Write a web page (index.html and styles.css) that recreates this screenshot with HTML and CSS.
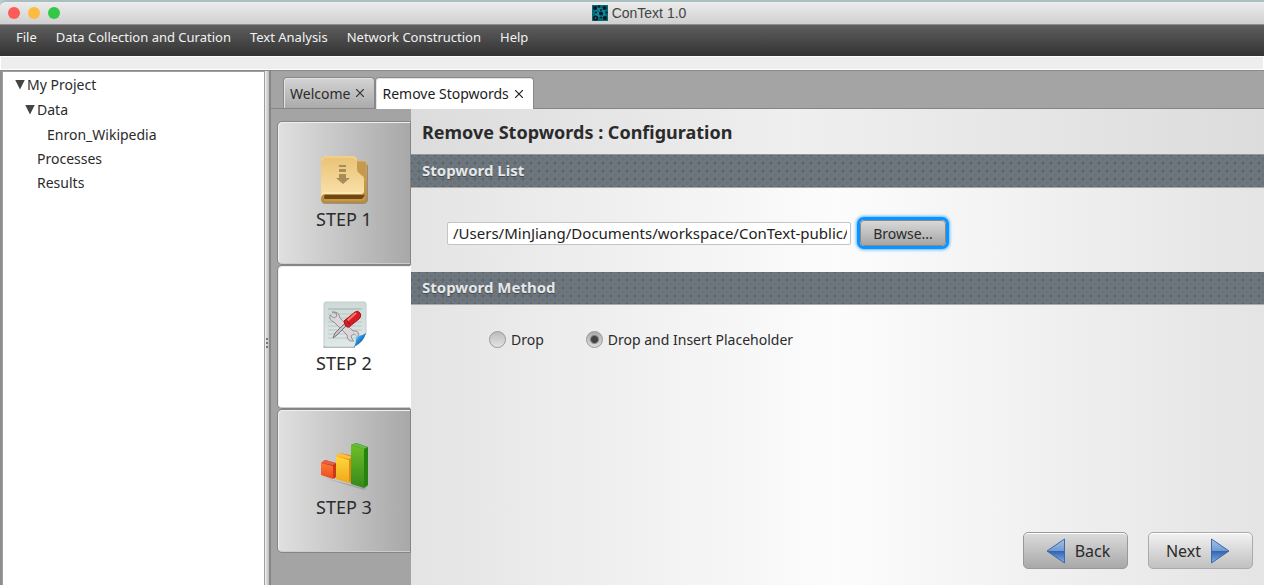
FILE: index.html
```html
<!DOCTYPE html>
<html lang="en">

<head>
    <meta charset="UTF-8">
    <meta name="viewport" content="width=device-width, initial-scale=1.0">
    <title>ConText 1.0</title>
    <link rel="stylesheet" href="styles.css">
</head>

<body>

    <!-- Title bar -->
    <header class="titlebar">
        <div class="lights">
            <button class="light close" aria-label="Close"></button>
            <button class="light minimize" aria-label="Minimize"></button>
            <button class="light maximize" aria-label="Maximize"></button>
        </div>
        <h1 class="app-name">
            <svg width="16" height="16" viewBox="0 0 16 16" aria-hidden="true">
                <rect width="16" height="16" fill="#08687c"/>
                <rect x="3" y="3" width="10" height="9" fill="#0e8599"/>
                <path d="M3 3l6 6M9 9l4 4" stroke="#0a5565" fill="none"/>
                <g fill="#061a20">
                    <circle cx="3" cy="3" r="2"/><circle cx="7" cy="1.500" r="1.200"/><circle cx="12.500" cy="3" r="2"/>
                    <circle cx="9" cy="8.500" r="2"/><circle cx="4" cy="7.500" r="1"/><circle cx="14.500" cy="7.500" r="1"/>
                    <circle cx="3.500" cy="13" r="2.600"/><circle cx="13" cy="13" r="2"/><circle cx="9" cy="12.500" r="1"/>
                    <circle cx="9" cy="5" r="1"/>
                </g>
                <circle cx="3.500" cy="13" r=".8" fill="#5f8e96"/>
            </svg>
            ConText 1.0
        </h1>
    </header>

    <!-- Menu -->
    <nav class="menubar">
        <button>File</button>
        <button>Data Collection and Curation</button>
        <button>Text Analysis</button>
        <button>Network Construction</button>
        <button>Help</button>
    </nav>
    <div class="toolbar"></div>

    <div class="workspace">

        <!-- Project tree -->
        <aside class="sidebar">
            <ul class="tree">
                <li>
                    <button class="toggle"><span class="arrow"></span>My Project</button>
                    <ul>
                        <li>
                            <button class="toggle"><span class="arrow"></span>Data</button>
                            <ul>
                                <li><span class="leaf">Enron_Wikipedia</span></li>
                            </ul>
                        </li>
                        <li><span class="leaf">Processes</span></li>
                        <li><span class="leaf">Results</span></li>
                    </ul>
                </li>
            </ul>
        </aside>

        <div class="splitter"><i></i><i></i><i></i></div>

        <main class="main">
            <div class="tabs">
                <div class="tab">
                    <span>Welcome</span>
                    <button aria-label="Close Welcome"><svg width="8" height="8" viewBox="0 0 8 8"><path d="M0 0l8 8M8 0L0 8" stroke="#333" stroke-width="1.200"/></svg></button>
                </div>
                <div class="tab active">
                    <span>Remove Stopwords</span>
                    <button aria-label="Close Remove Stopwords"><svg width="8" height="8" viewBox="0 0 8 8"><path d="M0 0l8 8M8 0L0 8" stroke="#222" stroke-width="1.200"/></svg></button>
                </div>
            </div>

            <div class="pane">

                <!-- Steps -->
                <div class="steps">
                    <button class="step">
                        <svg width="50" height="50" viewBox="0 0 50 50" aria-hidden="true">
                            <defs>
                                <linearGradient id="cover" x1="0" y1="0" x2="0" y2="1">
                                    <stop offset="0" stop-color="#e9c274"/><stop offset="1" stop-color="#fbe3ad"/>
                                </linearGradient>
                                <linearGradient id="spine" x1="0" y1="0" x2="0" y2="1">
                                    <stop offset="0" stop-color="#d9a850"/><stop offset="1" stop-color="#b98b3c"/>
                                </linearGradient>
                            </defs>
                            <path d="M3 46q0 3 3 3h38q4 0 5-4V10H5z" fill="#555" opacity=".45"/>
                            <path d="M30 6h14q4 0 4 4v34q0 4-4 4H5q-3 0-3-4V36z" fill="url(#spine)"/>
                            <path d="M38 7h6q3 0 3 3v14l-6-4-3-4z" fill="#c59a4c"/>
                            <path d="M6 40h38q2 0 2-2l-1 4-2 2H6q-2-2 0-4z" fill="#6d4817"/>
                            <path d="M5 44h38l3-3v2q0 3-3 3H6z" fill="#c99943"/>
                            <path d="M2 5q0-4 4-4h28q4 0 4 4v9q0 3 2 4l2 2q3 1 3 4v12q0 3-3 3H6q-3 0-4 4z" fill="url(#cover)"/>
                            <path d="M3 6q0-4 3-4h28q3 0 3 3" fill="none" stroke="#f6dc9d"/>
                            <path d="M4 38h38q2 0 2-2" fill="none" stroke="#fff0c4"/>
                            <path d="M20 10h7v2h-7zM20 14h7v3h-7zM20 19h7v4h4l-7 6-7-6h3z" fill="#a88d58"/>
                        </svg>
                        <span>STEP 1</span>
                    </button>
                    <button class="step active">
                        <svg width="50" height="50" viewBox="0 0 50 50" aria-hidden="true">
                            <defs>
                                <linearGradient id="sheet" x1="0" y1="0" x2="0" y2="1">
                                    <stop offset="0" stop-color="#cddad8"/><stop offset="1" stop-color="#e0e8e6"/>
                                </linearGradient>
                                <linearGradient id="curl" x1="0" y1="0" x2="1" y2="1">
                                    <stop offset=".1" stop-color="#e8f8ff"/><stop offset=".4" stop-color="#2a94dc"/><stop offset=".8" stop-color="#0a4a9c"/>
                                </linearGradient>
                            </defs>
                            <path d="M4 47h32v2H5z" fill="#a5aaa9"/>
                            <path d="M7 3h38q2 0 2 2v30L35 48H7q-2 0-2-2V5q0-2 2-2z" fill="url(#sheet)" stroke="#c0ccca"/>
                            <path d="M9 10h34" stroke="#a1adab"/>
                            <path d="M9 15h34M9 19h34M9 23h34M9 27h34M9 31h34M9 35h32M9 39h27" stroke="#bcc8c6"/>
                            <path d="M13 13q7-1 8 6l13 13q7-1 5 6l-4-3-3 2 1 3 2 2q-7 1-7-6L15 23q-5-1-4-7l4 3 3-2-1-3z" fill="#dcd6d8" stroke="#969094"/>
                            <path d="M14 39l2-5 10-10 2 2-10 10z" fill="#c4c4c7" stroke="#77777b"/>
                            <path d="M25 22L36 13q3-2 5 1t-1 6L30 28q-4 1-5-6z" fill="#d51f24" stroke="#a8151a"/>
                            <path d="M28 22l9-8" stroke="#ff7773" stroke-width="2"/>
                            <path d="M27 20l4 6" stroke="#991015"/>
                            <path d="M35 48q3-5 1-12 6 2 11-2-2 9-12 14z" fill="url(#curl)"/>
                        </svg>
                        <span>STEP 2</span>
                    </button>
                    <button class="step">
                        <svg width="50" height="50" viewBox="0 0 50 50" aria-hidden="true">
                            <defs>
                                <linearGradient id="red" x1="0" y1="0" x2="0" y2="1">
                                    <stop offset="0" stop-color="#ff7a35"/><stop offset="1" stop-color="#e84a1e"/>
                                </linearGradient>
                                <linearGradient id="yellow" x1="0" y1="0" x2="0" y2="1">
                                    <stop offset="0" stop-color="#ffd83c"/><stop offset="1" stop-color="#f0a81c"/>
                                </linearGradient>
                                <linearGradient id="green" x1="0" y1="0" x2="0" y2="1">
                                    <stop offset="0" stop-color="#6fbe28"/><stop offset="1" stop-color="#35881a"/>
                                </linearGradient>
                            </defs>
                            <path d="M3 34l14 4 16 4 12 3 4-3v1l-4 4-14-4-16-5z" fill="#555" opacity=".25"/>
                            <path d="M2 20l4-3 11 3v14l-2 2z" fill="#c93817"/>
                            <path d="M2 20l4-3 11 3-3 2z" fill="#e8603f"/>
                            <path d="M2 20l12 3v13L2 32z" fill="url(#red)"/>
                            <path d="M17 13l5-3 12 3v25l-3 2z" fill="#dc8b10"/>
                            <path d="M17 13l4-3 12 4-3 2z" fill="#ffbf3a"/>
                            <path d="M17 13l13 4v23l-13-4z" fill="url(#yellow)"/>
                            <path d="M32 2l5-2 12 4v38l-4 3z" fill="#25840f"/>
                            <path d="M32 2l4-2 13 4-4 2z" fill="#66b942"/>
                            <path d="M32 2l13 4v39l-13-4z" fill="url(#green)"/>
                        </svg>
                        <span>STEP 3</span>
                    </button>
                </div>

                <!-- Configuration -->
                <form class="config">
                    <h2>Remove Stopwords : Configuration</h2>

                    <h3 id="list-title">Stopword List</h3>
                    <div class="file-row">
                        <input type="text" class="path" aria-labelledby="list-title" value="/Users/MinJiang/Documents/workspace/ConText-public/">
                        <button type="button" class="browse">Browse...</button>
                    </div>

                    <h3>Stopword Method</h3>
                    <div class="method-row">
                        <label><input type="radio" name="method">Drop</label>
                        <label><input type="radio" name="method" checked>Drop and Insert Placeholder</label>
                    </div>

                    <div class="actions">
                        <button type="button" class="nav-btn back">
                            <svg width="20" height="26" viewBox="0 0 20 26" aria-hidden="true">
                                <defs>
                                    <linearGradient id="blue" x1="0" y1="0" x2="0" y2="1">
                                        <stop offset="0" stop-color="#a8c4e4"/><stop offset=".5" stop-color="#6c9bd2"/><stop offset=".52" stop-color="#3565ae"/><stop offset="1" stop-color="#7fb0ee"/>
                                    </linearGradient>
                                </defs>
                                <path d="M1 13L18.500 1v24z" fill="url(#blue)" stroke="#3c68ac"/>
                            </svg>
                            Back
                        </button>
                        <button type="button" class="nav-btn next">
                            Next
                            <svg width="20" height="26" viewBox="0 0 20 26" aria-hidden="true">
                                <path d="M19 13L1.500 1v24z" fill="url(#blue)" stroke="#3c68ac"/>
                            </svg>
                        </button>
                    </div>
                </form>
            </div>
        </main>
    </div>

</body>

</html>
```
FILE: styles.css
```css
* {
    box-sizing: border-box;
}

body {
    margin: 0;
    min-height: 100vh;
    display: flex;
    flex-direction: column;
    background-color: #b5cdcd;
    color: #2b2b2b;
    font-family: "Lucida Grande", "Noto Sans", sans-serif;
    font-size: 14px;
}

button,
input {
    font: inherit;
    color: inherit;
}

button {
    padding: 0;
    border: 0;
    background: none;
}

h1,
h2,
h3,
ul {
    margin: 0;
    padding: 0;
}

/* Title bar */
.titlebar {
    display: grid;
    grid-template-columns: 1fr auto 1fr;
    align-items: center;
    height: 25px;
    padding-left: 8px;
    border-top: 2px solid #a9bfc0;
    border-bottom: 1px solid #8c8c8c;
    border-radius: 6px 0 0 0;
    background: linear-gradient(#ececec, #d0d0d0);
}

.lights {
    display: flex;
    gap: 8px;
}

.light {
    width: 12px;
    height: 12px;
    border-radius: 50%;
}

.close {
    background-color: #fc5b57;
}

.minimize {
    background-color: #fdbc40;
}

.maximize {
    background-color: #34c84a;
}

.app-name {
    display: flex;
    align-items: center;
    gap: 4px;
    margin-left: 6px;
    font-family: "Helvetica Neue", "Liberation Sans", sans-serif;
    font-size: 14px;
    font-weight: normal;
    color: #444;
}

/* Menu */
.menubar {
    display: flex;
    align-items: flex-start;
    gap: 19px;
    height: 31px;
    padding: 3px 16px;
    background: linear-gradient(#5e5e5e, #333);
    color: #f2f2f2;
    font-size: 13px;
    line-height: 18px;
}

.toolbar {
    height: 14px;
    border: 1px solid #fff;
    background-color: #eee;
}

/* Workspace */
.workspace {
    flex: 1;
    display: flex;
    border-top: 1px solid #888;
    border-left: 2px solid #8e8e8e;
    background-color: #a4a4a4;
}

.sidebar {
    width: 263px;
    border: 1px solid #a0a0a0;
    border-bottom: 0;
    background-color: #fff;
}

.tree,
.tree ul {
    list-style: none;
}

.tree {
    padding: 0 12px;
}

.tree ul {
    padding-left: 10px;
}

.toggle,
.leaf {
    display: flex;
    align-items: center;
    gap: 2px;
    height: 25px;
}

.leaf {
    padding-left: 12px;
    height: 24px;
}

.arrow {
    width: 10px;
    height: 10px;
    background-color: #444;
    clip-path: polygon(0 0, 100% 0, 50% 100%);
}

.splitter {
    display: flex;
    flex-direction: column;
    align-items: center;
    justify-content: center;
    gap: 2px;
    width: 6px;
    padding-top: 30px;
    border-right: 2px solid #858585;
    background: linear-gradient(to right, #f0f0f0, #bbb);
}

.splitter i {
    width: 2px;
    height: 2px;
    background-color: #777;
}

/* Tabs */
.main {
    flex: 1;
    display: flex;
    flex-direction: column;
}

.tabs {
    display: flex;
    height: 38px;
    padding: 6px 12px 0;
    border-bottom: 1px solid #858585;
}

.tab {
    display: flex;
    align-items: center;
    gap: 6px;
    padding: 0 10px 0 6px;
    border: 1px solid #888;
    border-bottom: 0;
    border-radius: 4px 4px 0 0;
    background: linear-gradient(#d4d4d4, #aaa);
    box-shadow: inset 1px 1px 0 #e4e4e4;
}

.tab.active {
    margin-bottom: -1px;
    background: #fff;
    color: #1c1c1c;
}

.tab button {
    display: flex;
}

.pane {
    flex: 1;
    display: flex;
}

/* Steps */
.steps {
    width: 140px;
    padding: 12px 0 32px 6px;
}

.step {
    display: flex;
    flex-direction: column;
    align-items: center;
    width: 100%;
    height: 144px;
    padding-top: 33px;
    border: 1px solid #858585;
    border-radius: 5px 0 0 5px;
    background: linear-gradient(to right, #e0e0e0, #a8a8a8);
    box-shadow: inset 1px 1px 0 #f0f0f0, inset 0 -1px 0 #ccc;
    font-size: 18px;
    line-height: 28px;
}

.step.active {
    border-right-color: #fff;
    background: #fff;
}

/* Configuration */
.config {
    flex: 1;
    display: flex;
    flex-direction: column;
    background: linear-gradient(to right, #e4e4e4, #fcfcfc 50%, #e4e4e4);
}

.config h2 {
    height: 46px;
    padding-left: 11px;
    border-bottom: 1px solid #999;
    background: linear-gradient(to right, #dcdcdc, #efefef 45%, #dcdcdc);
    font-size: 18px;
    line-height: 46px;
}

.config h3 {
    height: 33px;
    padding-left: 11px;
    border-bottom: 1px solid #aaa;
    background: radial-gradient(circle, #697279 1px, #69727a 2px, #757e85 3px, #656e75 4px, #606970 5px) 0 0 / 8px 8px;
    color: #e4e8ea;
    font-size: 15px;
    line-height: 31px;
    text-shadow: 0 1px 1px #444;
}

.file-row {
    display: flex;
    align-items: center;
    gap: 9px;
    height: 84px;
    padding: 6px 36px 0;
}

.path {
    width: 404px;
    height: 23px;
    padding: 0 3px 0 5px;
    border: 1px solid #c4c4c4;
    border-radius: 2px;
    background-color: #fff;
    color: #222;
    font-size: 15px;
}

.browse {
    width: 86px;
    height: 26px;
    border: 1px solid #888;
    border-radius: 4px;
    background: linear-gradient(#d8d8d8, #a6a6a6);
    box-shadow: 0 0 0 3px #0c93ff, 0 0 3px 4px #5cb8ff;
}

.method-row {
    display: flex;
    gap: 42px;
    padding: 23px 78px;
}

.method-row label {
    display: flex;
    align-items: center;
    gap: 5px;
    height: 22px;
}

.method-row input {
    appearance: none;
    width: 17px;
    height: 17px;
    margin: 0;
    border: 1px solid #999;
    border-radius: 50%;
    background: linear-gradient(#bbb, #e4e4e4);
}

.method-row input:checked {
    background: radial-gradient(circle, #444 3px, transparent 5px), linear-gradient(#aaa, #ddd);
}

.actions {
    display: flex;
    justify-content: flex-end;
    gap: 20px;
    margin-top: auto;
    padding: 0 11px 16px;
}

.nav-btn {
    display: flex;
    align-items: center;
    justify-content: center;
    gap: 9px;
    width: 105px;
    height: 37px;
    border: 1px solid #aaa;
    border-radius: 5px;
    box-shadow: inset 0 1px 0 #fff;
    font-size: 16px;
}

.back {
    padding-left: 5px;
    border-color: #999;
    background: linear-gradient(#dcdcdc, #a8a8a8);
}

.next {
    padding-right: 5px;
    background: linear-gradient(#f2f2f2, #c0c0c0);
}
```
